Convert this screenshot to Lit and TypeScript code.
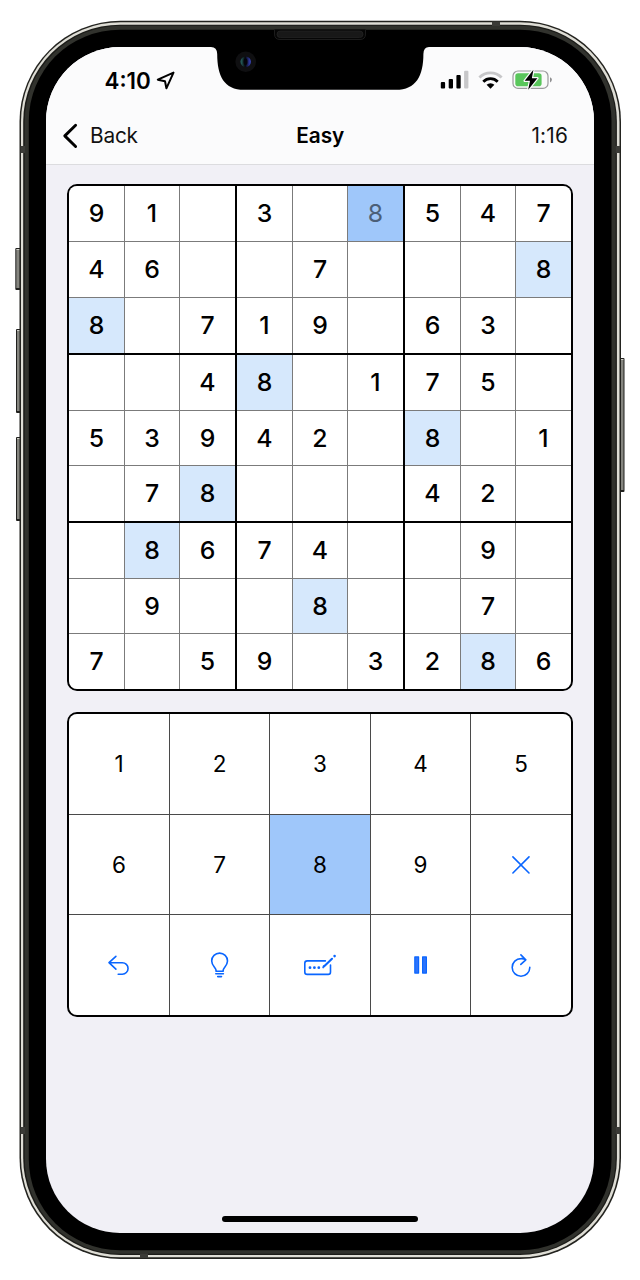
import { LitElement, html, svg, css } from "lit";
import { customElement } from "lit/decorators.js";
import { classMap } from "lit/directives/class-map.js";

const BOARD = [
  "91.3.8547",
  "46..7...8",
  "8.719.63.",
  "..48.175.",
  "53942.8.1",
  ".78...42.",
  ".8674..9.",
  ".9..8..7.",
  "7.59.3286",
];
const ACTIVE = "8";

@customElement("device-frame")
class DeviceFrame extends LitElement {
  static styles = css`
    :host { display: block; width: 640px; height: 1280px; }
    svg { display: block; }
  `;
  render() {
    const button = (x: number, y: number, w: number, h: number) => svg`
      <rect x=${x} y=${y} width=${w} height=${h} rx="1" fill="#20201e"/>
      <rect x=${x + 1} y=${y + 2} width=${w - 2} height=${h - 4} fill="#85857f"/>
      <rect x=${x + 1} y=${y + 1} width=${w - 2} height="1" fill="#d0d0c8"/>`;
    return html`<svg width="640" height="1280" viewBox="0 0 640 1280">
      ${button(15.3, 248, 5.5, 42)}${button(16, 329, 5, 84)}${button(16, 437, 5, 84)}${button(619.5, 358, 5, 134)}
      <rect x="19.5" y="20.8" width="601.5" height="1238.2" rx="101" fill="#23231f"/>
      <rect x="21" y="22.2" width="598.5" height="1235.1" rx="99.5" fill="#deddd5"/>
      <rect x="23.2" y="24.7" width="593.7" height="1230.2" rx="97" fill="#1b1b18"/>
      <rect x="24.7" y="25.8" width="591" height="1228" rx="96" fill="#31322d"/>
      <rect x="28.8" y="29.7" width="582.7" height="1220.5" rx="91" fill="#000"/>
      <g fill="#3b3b37">
        <rect x="20.5" y="146" width="4.5" height="7"/><rect x="20.5" y="1127" width="4.5" height="7"/>
        <rect x="615.5" y="146" width="4.5" height="7"/><rect x="615.5" y="1127" width="4.5" height="7"/>
        <rect x="492" y="21.5" width="8" height="4.5"/><rect x="140" y="1253.5" width="8" height="4.5"/>
      </g>
      <path d="M274.5 29.5V34Q274.5 39.5 280 39.5H360Q365.5 39.5 365.5 34V29.5" fill="#050505" stroke="#1c1c1c"/>
      <rect x="277" y="31" width="86" height="6.6" rx="3.3" fill="#181818" stroke="#262626" stroke-width=".7"/>
    </svg>`;
  }
}

@customElement("device-notch")
class DeviceNotch extends LitElement {
  static styles = css`
    :host { display: block; width: 218px; height: 45px; }
    svg { display: block; }
  `;
  render() {
    return html`<svg width="218" height="45" viewBox="211 46 218 45">
      <defs><linearGradient id="lens"><stop stop-color="#2a6a66"/><stop offset=".45" stop-color="#04050a"/><stop offset="1" stop-color="#3c48c8"/></linearGradient></defs>
      <path d="M211 46V47Q217 47 217.2 54C217.2 76 224 89.8 244 89.8H396C416 89.8 423.4 76 423.4 54Q423.6 47 429 47V46Z"/>
      <circle cx="245.7" cy="61.8" r="10.3" fill="#0f0f11"/>
      <circle cx="245.7" cy="61.8" r="5.2" fill="url(#lens)"/>
      <ellipse cx="245.5" cy="61.8" rx="2" ry="3.2" fill="#05050b"/>
    </svg>`;
  }
}

@customElement("status-bar")
class StatusBar extends LitElement {
  static styles = css`
    :host { display: flex; justify-content: space-between; height: 66px; box-sizing: border-box; padding: 20px 41px 0 58.5px; }
    .left { display: flex; align-items: flex-start; gap: 5px; }
    .time { font: 600 22.4px/27px Inter, sans-serif; letter-spacing: 0; color: #000; }
    .arrow { margin-top: 4px; }
    .icons { margin-top: 2px; }
  `;
  render() {
    return html`
      <div class="left"><span class="time">4:10</span>
        <svg class="arrow" width="19" height="20" viewBox="0 0 19 20"><path d="M17.5 1.6 1.8 8.7 9 10.3 10.4 17.3Z" fill="none" stroke="#000" stroke-width="2" stroke-linejoin="round"/></svg>
      </div>
      <svg class="icons" width="113" height="24" viewBox="440 69 113 24">
        <g fill="#000">
          <rect x="440.8" y="82" width="4.3" height="6.4" rx="1"/>
          <rect x="448.7" y="79" width="4.3" height="9.4" rx="1"/>
          <rect x="456.4" y="75" width="4.3" height="13.4" rx="1"/>
          <rect x="464.1" y="70.8" width="4.3" height="17.6" rx="1" fill="#c7c7c9"/>
        </g>
        <g fill="none" stroke-width="2.8">
          <path d="M479.4 77.6A15.6 15.6 0 0 1 501.6 77.6" stroke="#c7c7c9"/>
          <path d="M483.3 81.7A10 10 0 0 1 497.7 81.7" stroke="#000"/>
        </g>
        <path d="M486.6 84.8A5.6 5.6 0 0 1 494.4 84.8L490.5 88.7Z"/>
        <rect x="513" y="71" width="35" height="17.4" rx="5" fill="#fafafa" stroke="#9b9b9d" stroke-width="1.2"/>
        <path d="M550 77.2Q551.9 78 551.9 79.8T550 82.5Z" fill="#909092"/>
        <rect x="515.3" y="73.2" width="26.3" height="13" rx="2.8" fill="#59c65b"/>
        <path d="M533.4 69.7 524.7 80.8H530L528.2 89.7 537.4 78.3H531.9Z" fill="#000" stroke="#fafafa" stroke-width="2.4" paint-order="stroke" stroke-linejoin="round"/>
      </svg>`;
  }
}

@customElement("nav-bar")
class NavBar extends LitElement {
  static styles = css`
    :host { display: grid; grid-template-columns: 1fr auto 1fr; align-items: center; height: 52px; box-sizing: border-box; padding: 0 26px 5px 16px; border-bottom: 1px solid #dcdcdf; font: 400 20.8px/28px Inter, sans-serif; color: #111; letter-spacing: -.2px; }
    .back { display: flex; align-items: center; gap: 11px; }
    .title { font-weight: 600; color: #000; letter-spacing: -.1px; padding-left: 10.5px; }
    .timer { text-align: right; letter-spacing: .2px; }
    svg { display: block; }
  `;
  render() {
    return html`
      <div class="back"><svg width="17" height="26" viewBox="0 0 17 26"><path d="M13.6 2.3 2.8 12.9 13.6 23.5" fill="none" stroke="#000" stroke-width="2.9" stroke-linecap="round" stroke-linejoin="round"/></svg><span>Back</span></div>
      <div class="title">Easy</div>
      <div class="timer">1:16</div>`;
  }
}

@customElement("sudoku-board")
class SudokuBoard extends LitElement {
  static styles = css`
    :host { display: block; }
    .board { width: 506px; height: 507px; box-sizing: border-box; border: 2px solid #000; border-radius: 10px; overflow: hidden; background: #000; display: grid; grid-template-columns: repeat(3, 166px); grid-template-rows: 167px 166px 166px; gap: 2px; }
    .block { display: grid; grid-template-columns: 55px 54px 55px; grid-template-rows: 55px 54px 55px; gap: 1px; background: #7b7b7b; }
    .block.tall { grid-template-rows: 55px 55px 55px; }
    .cell { display: flex; align-items: center; justify-content: center; box-sizing: border-box; padding-bottom: 1px; background: #fff; color: #000; font: 550 24.8px/30px Inter, sans-serif; }
    .match { background: #d6e8fc; }
    .selected { background: #9fc7fa; color: #4b5f78; font-weight: 400; }
  `;
  render() {
    const idx = [0, 1, 2];
    return html`<div class="board">${idx.map((br) => idx.map((bc) => html`
      <div class=${classMap({ block: true, tall: br === 0 })}>${idx.map((r) => idx.map((c) => {
        const row = br * 3 + r;
        const col = bc * 3 + c;
        const v = BOARD[row][col];
        const selected = row === 0 && col === 5;
        return html`<div class=${classMap({ cell: true, match: v === ACTIVE && !selected, selected })}>${v === "." ? "" : v}</div>`;
      }))}</div>`))}</div>`;
  }
}

const icons: Record<string, unknown> = {
  clear: svg`<path d="M11.9 11.9 28 28M28 11.9 11.9 28"/>`,
  undo: svg`<path d="M16.9 11.4 10 17.7 16.9 24.1M10.4 17.7H23.3A5.7 5.7 0 0 1 23.3 29.2H19.2"/>`,
  hint: svg`<path d="M16 26.3V25C16 22.8 11.7 20.6 11.7 15.9A7.9 7.8 0 0 1 27.5 15.9C27.5 20.6 23.2 22.8 23.2 25V26.3ZM15.8 28.8H23.4M17.7 31.6H21.5"/>`,
  notes: svg`<path d="M25.4 15.9H7.2Q4.8 15.9 4.8 18.3V27Q4.8 29.4 7.2 29.4H28.2Q30.5 29.4 30.5 27V20"/><path d="M24.2 21.3 32 13.8" stroke-width="2.1"/><path d="M23.1 22.6 23.6 21"/><g fill="#0a66ff" stroke="none"><circle cx="10" cy="22.7" r="1.4"/><circle cx="14.4" cy="22.7" r="1.4"/><circle cx="18.8" cy="22.7" r="1.4"/><circle cx="34.6" cy="11.1" r="1.3"/></g>`,
  pause: svg`<path d="M13.8 11.9H17.6V28.1H13.8ZM21.6 11.9H25.4V28.1H21.6Z" fill="#2c73fb" stroke-width="1.2"/>`,
  restart: svg`<path d="M24.8 14.8C23 13.7 21.5 13.5 20 13.6A8.8 8.8 0 1 0 28.8 22.4M19.9 9.9 24.8 14.8 19.8 19.4"/>`,
};

@customElement("key-pad")
class KeyPad extends LitElement {
  static styles = css`
    :host { display: block; }
    .pad { width: 506px; height: 305px; box-sizing: border-box; border: 2px solid #000; border-radius: 10px; overflow: hidden; background: #4a4a4a; display: grid; grid-template-columns: 100px 99px 100px 99px 100px; grid-template-rows: 100px 99px 100px; gap: 1px; }
    .key { display: flex; align-items: center; justify-content: center; background: #fff; color: #000; font: 370 22.5px/28px Inter, sans-serif; }
    .on { background: #9fc7fa; }
    svg { fill: none; stroke: #0a66ff; stroke-width: 1.6; stroke-linecap: round; stroke-linejoin: round; }
  `;
  render() {
    const keys = ["1", "2", "3", "4", "5", "6", "7", "8", "9", "clear", "undo", "hint", "notes", "pause", "restart"];
    return html`<div class="pad">${keys.map((k) => html`<div class=${classMap({ key: true, on: k === ACTIVE })}>${
      k in icons ? html`<svg width="40" height="40" viewBox="0 0 40 40">${icons[k]}</svg>` : k}</div>`)}</div>`;
  }
}

@customElement("app-root")
class AppRoot extends LitElement {
  static styles = css`
    :host { display: block; width: 640px; height: 1280px; background: #fff; position: relative; overflow: hidden; }
    .frame { position: absolute; inset: 0; }
    .stage { position: relative; padding: 47px 46px 0; }
    .screen { width: 548px; height: 1185.5px; border-radius: 74px; overflow: hidden; background: #f1f0f6; display: flex; flex-direction: column; }
    .header { background: #fbfbfc; }
    .content { flex: 1; display: flex; flex-direction: column; align-items: flex-start; gap: 21px; padding: 19px 21px 0; }
    .home { width: 196px; height: 6px; border-radius: 3px; background: #000; align-self: center; margin-bottom: 10.5px; }
    .notch { position: absolute; left: 211px; top: 46px; }
  `;
  render() {
    return html`
      <device-frame class="frame"></device-frame>
      <div class="stage">
        <div class="screen">
          <div class="header"><status-bar></status-bar><nav-bar></nav-bar></div>
          <div class="content"><sudoku-board></sudoku-board><key-pad></key-pad></div>
          <div class="home"></div>
        </div>
        <device-notch class="notch"></device-notch>
      </div>`;
  }
}
